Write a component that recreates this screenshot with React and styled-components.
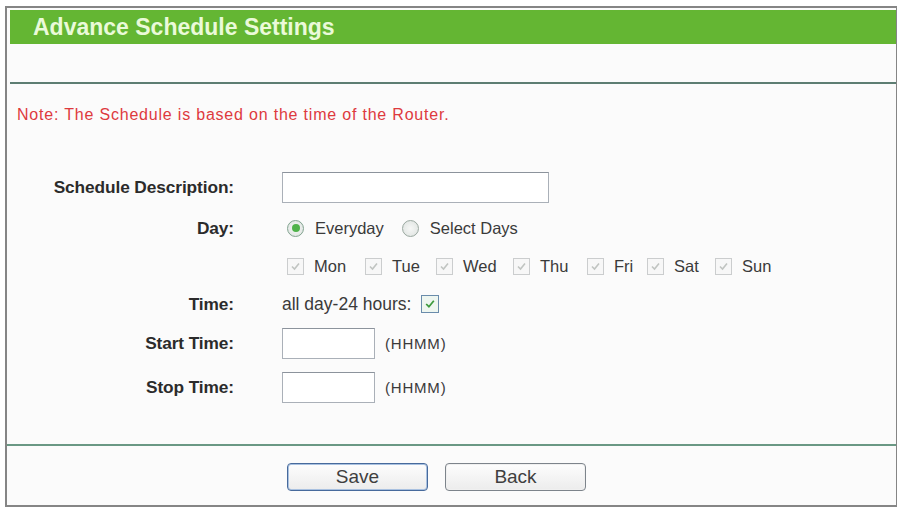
import React from 'react';
import styled, {createGlobalStyle, css} from 'styled-components';

const GlobalStyle = createGlobalStyle`
  html, body {
    margin: 0;
    padding: 0;
    background: #ffffff;
  }
  body {
    font-family: 'Liberation Sans', Arial, sans-serif;
    color: #333333;
  }
`;

const Frame = styled.div`
  box-sizing: border-box;
  width: 892px;
  height: 501px;
  margin: 6px 0 0 5px;
  padding: 2px 0 0 3px;
  border: 2px solid #858585;
  border-right-width: 1px;
  background: #fbfbfb;
  display: flex;
  flex-direction: column;
`;

const TitleBar = styled.div`
  height: 34px;
  background: #64b633;
  display: flex;
  align-items: center;
  padding-left: 23px;
  flex-shrink: 0;
`;

const Title = styled.h1`
  margin: 0;
  font-size: 23px;
  font-weight: bold;
  color: #eafad9;
  letter-spacing: 0;
`;

const Rule = styled.hr`
  margin: ${({$top}) => $top} 0 0 ${({$left}) => $left || '0'};
  border: 0;
  height: 2px;
  background: ${({$color}) => $color};
  flex-shrink: 0;
`;

const Note = styled.p`
  margin: 21px 0 0 7px;
  font-size: 16px;
  line-height: 20px;
  letter-spacing: 0.8px;
  color: #de3a3e;
`;

const Form = styled.div`
  display: grid;
  grid-template-columns: 224px 1fr;
  grid-template-rows: 42px 40px 37px 38px 41px 46px;
  column-gap: 48px;
  margin-top: 41px;
`;

const Label = styled.div`
  display: flex;
  align-items: center;
  justify-content: flex-end;
  font-size: 17.3px;
  font-weight: bold;
  color: #2b2b2b;
  letter-spacing: -0.1px;
`;

const Value = styled.div`
  display: flex;
  align-items: center;
  font-size: ${({$size}) => $size || 16.5}px;
  color: #3a3a3a;
`;

const TextInput = styled.div`
  box-sizing: border-box;
  width: ${({$width}) => $width}px;
  height: ${({$height}) => $height}px;
  border: 1px solid #aab0b8;
  border-top-color: #8c939c;
  background: #ffffff;
`;

const Hint = styled.span`
  margin-left: 10px;
  font-size: 15px;
  letter-spacing: 0.8px;
  color: #3a3a3a;
`;

const Option = styled.label`
  display: flex;
  align-items: center;
  margin-right: ${({$gap}) => $gap}px;
`;

const Radio = styled.span`
  box-sizing: border-box;
  width: 17px;
  height: 17px;
  border-radius: 50%;
  margin: 0 11px 0 5px;
  border: 1px solid #9aa8a0;
  background: radial-gradient(circle, #f6f7f6 0%, #dde2df 100%);
  position: relative;
  ${({$checked}) => $checked && css`
    border-color: #82a390;
    &::after {
      content: '';
      position: absolute;
      left: 3.5px;
      top: 3.5px;
      width: 8px;
      height: 8px;
      border-radius: 50%;
      background: #4fb24a;
    }
  `}
`;

const Box = styled.span`
  box-sizing: border-box;
  width: ${({$enabled}) => ($enabled ? 18 : 17)}px;
  height: ${({$enabled}) => ($enabled ? 18 : 17)}px;
  display: inline-flex;
  align-items: center;
  justify-content: center;
  flex-shrink: 0;
  border: 1px solid ${({$enabled}) => ($enabled ? '#6a8cab' : '#cbcdce')};
  background: ${({$enabled}) => ($enabled ? '#eef6f0' : '#f7f7f7')};
  margin: ${({$margin}) => $margin};
`;

const DayRow = styled.div`
  display: flex;
  align-items: center;
  padding-left: 5px;
  font-size: 16.5px;
  color: #3a3a3a;
`;

const Day = styled.span`
  display: flex;
  align-items: center;
  width: ${({$width}) => ($width ? `${$width}px` : 'auto')};
`;

const ButtonBar = styled.div`
  display: flex;
  gap: 17px;
  padding: 17px 0 0 277px;
`;

const Button = styled.button`
  box-sizing: border-box;
  width: 141px;
  height: 28px;
  border-radius: 4px;
  border: 1px solid ${({$primary}) => ($primary ? '#476a9c' : '#7d848b')};
  box-shadow: ${({$primary}) => ($primary ? 'inset 0 0 0 1px #a9c1e0' : 'inset 0 0 0 1px #f0f0f0')};
  background: linear-gradient(#fdfdfd, #ececec);
  font-family: 'Liberation Sans', Arial, sans-serif;
  font-size: 19px;
  color: #3f3f3f;
  padding: 0;
  line-height: 26px;
`;

const Check = ({color, size = 11}) => (
  <svg width={size} height={size} viewBox="0 0 11 11">
    <path d="M2 5.5 L4.5 8 L9 2.5" fill="none" stroke={color} strokeWidth="1.6" />
  </svg>
);

// widths place each checkbox where the next one starts
const DAYS = [
  {name: 'Mon', width: 78},
  {name: 'Tue', width: 71},
  {name: 'Wed', width: 77},
  {name: 'Thu', width: 74},
  {name: 'Fri', width: 60},
  {name: 'Sat', width: 68},
  {name: 'Sun'}
];

const App = () => (
  <>
    <GlobalStyle />
    <Frame>
      <TitleBar>
        <Title>Advance Schedule Settings</Title>
      </TitleBar>
      <Rule $top="38px" $color="#5d7d72" />
      <Note>Note: The Schedule is based on the time of the Router.</Note>
      <Form>
        <Label>Schedule Description:</Label>
        <Value>
          <TextInput $width={267} $height={31} />
        </Value>

        <Label>Day:</Label>
        <Value>
          <Option $gap={13}>
            <Radio $checked />
            Everyday
          </Option>
          <Option $gap={0}>
            <Radio />
            Select Days
          </Option>
        </Value>

        <div />
        <DayRow>
          {DAYS.map((day) => (
            <Day key={day.name} $width={day.width}>
              <Box $margin="0 10px 0 0">
                <Check color="#c0c4c1" />
              </Box>
              {day.name}
            </Day>
          ))}
        </DayRow>

        <Label>Time:</Label>
        <Value $size={17.5}>
          all day-24 hours:
          <Box $enabled $margin="0 0 0 10px">
            <Check color="#3c9a3c" size={12} />
          </Box>
        </Value>

        <Label>Start Time:</Label>
        <Value>
          <TextInput $width={93} $height={31} />
          <Hint>(HHMM)</Hint>
        </Value>

        <Label>Stop Time:</Label>
        <Value>
          <TextInput $width={93} $height={31} />
          <Hint>(HHMM)</Hint>
        </Value>
      </Form>
      <Rule $top="34px" $left="-3px" $color="#6a9884" />
      <ButtonBar>
        <Button $primary>Save</Button>
        <Button>Back</Button>
      </ButtonBar>
    </Frame>
  </>
);

export default App;
